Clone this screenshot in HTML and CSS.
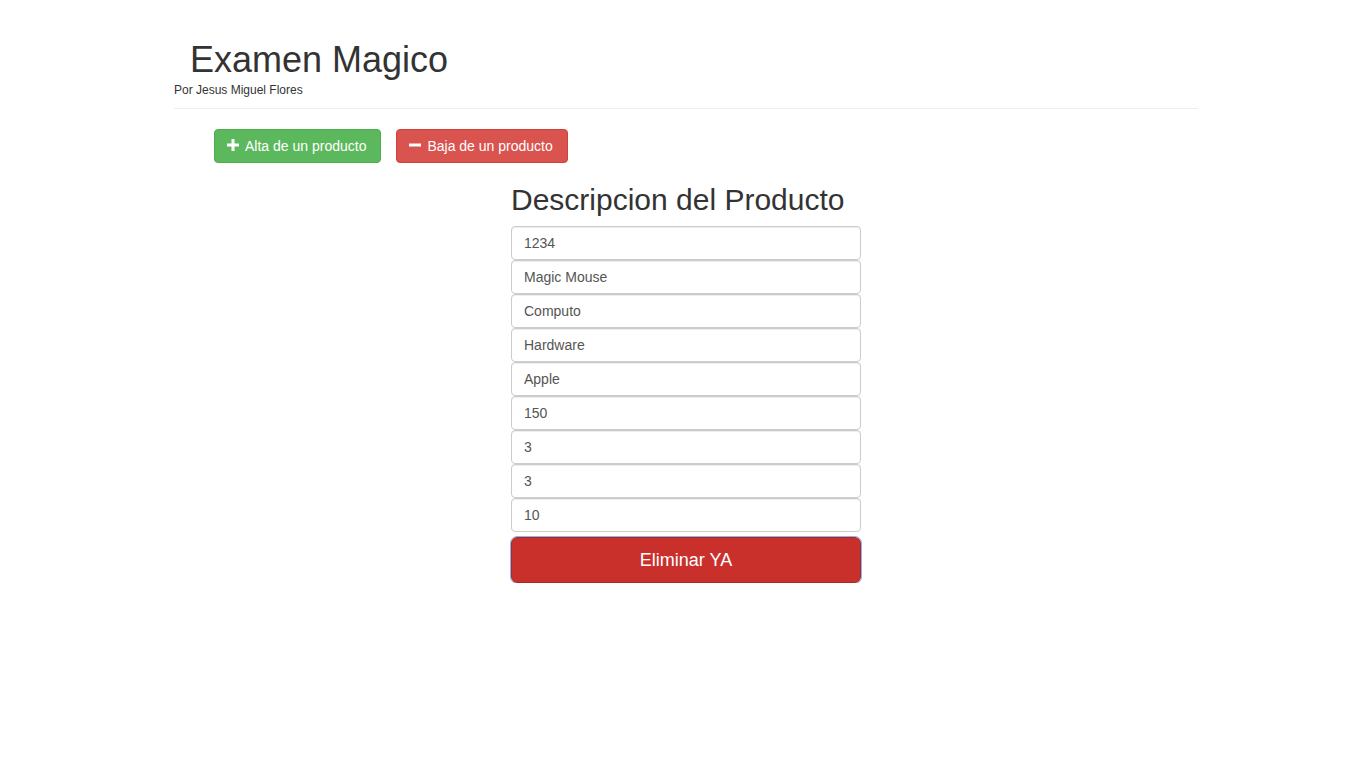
FILE: index.html
```html
<!DOCTYPE html>
<html lang="es">
<head>
<meta charset="utf-8">
<title>Examen Magico</title>
<link rel="stylesheet" href="styles.css">
</head>
<body>
<div class="container">
  <header class="page-header">
    <h1 class="title">Examen Magico</h1>
    <p class="subtitle">Por Jesus Miguel Flores</p>
  </header>
  <div class="actions">
    <button class="btn btn-success" type="button">
      <svg class="icon" viewBox="0 0 12 12" width="12" height="12"><path d="M4.5 0h3v4.5H12v3H7.5V12h-3V7.5H0v-3h4.5z" fill="#fff"/></svg>
      Alta de un producto
    </button>
    <button class="btn btn-danger" type="button">
      <svg class="icon" viewBox="0 0 12 12" width="12" height="12"><path d="M0 4.5h12v3H0z" fill="#fff"/></svg>
      Baja de un producto
    </button>
  </div>
  <form class="product-form">
    <h2 class="form-title">Descripcion del Producto</h2>
    <input class="form-control" type="text" value="1234">
    <input class="form-control" type="text" value="Magic Mouse">
    <input class="form-control" type="text" value="Computo">
    <input class="form-control" type="text" value="Hardware">
    <input class="form-control" type="text" value="Apple">
    <input class="form-control" type="text" value="150">
    <input class="form-control" type="text" value="3">
    <input class="form-control" type="text" value="3">
    <input class="form-control" type="text" value="10">
    <button class="btn-delete" type="button">Eliminar YA</button>
  </form>
</div>
</body>
</html>
```
FILE: styles.css
```css
* { box-sizing: border-box; }
html, body {
  margin: 0;
  padding: 0;
  background: #fff;
  font-family: "Liberation Sans", Arial, Helvetica, sans-serif;
  font-size: 14px;
  color: #333;
}
.container {
  width: 1024px;
  margin-left: 174px;
}
.page-header {
  padding-top: 40px;
  padding-bottom: 9px;
  border-bottom: 1px solid #eee;
}
.title {
  margin: 0 0 0 16px;
  font-size: 36px;
  font-weight: 500;
  line-height: 39.6px;
  color: #333;
}
.subtitle {
  margin: 0;
  padding-top: 2px;
  font-size: 12px;
  line-height: 17px;
}
.actions {
  display: flex;
  gap: 15px;
  padding-left: 40px;
  margin-top: 20px;
}
.btn {
  display: inline-flex;
  align-items: center;
  gap: 6px;
  height: 34px;
  padding: 6px 14px 6px 12px;
  font-family: inherit;
  font-size: 14px;
  line-height: 20px;
  color: #fff;
  border: 1px solid transparent;
  border-radius: 4px;
  cursor: pointer;
}
.btn-success { background: #5cb85c; border-color: #4cae4c; }
.btn-danger { background: #d9534f; border-color: #d43f3a; }
.icon { display: block; margin-top: -1px; }
.product-form {
  width: 350px;
  margin: 20px auto 0;
  display: flex;
  flex-direction: column;
}
.form-title {
  margin: 0 0 10px;
  font-size: 30px;
  font-weight: 500;
  line-height: 33px;
  color: #333;
}
.form-control {
  display: block;
  width: 100%;
  height: 34px;
  padding: 6px 12px;
  font-family: inherit;
  font-size: 14px;
  line-height: 20px;
  color: #555;
  background: #fff;
  border: 1px solid #ccc;
  border-radius: 4px;
  box-shadow: inset 0 1px 1px rgba(0,0,0,.075);
  margin: 0;
}
.btn-delete {
  margin-top: 5px;
  width: 100%;
  height: 46px;
  padding: 10px 16px;
  font-family: inherit;
  font-size: 18px;
  line-height: 24px;
  color: #fff;
  background: #c9302c;
  border: 1px solid #ac2925;
  border-radius: 6px;
  outline: 1px solid #8fb3ee;
  outline-offset: 0;
  cursor: pointer;
}
```
